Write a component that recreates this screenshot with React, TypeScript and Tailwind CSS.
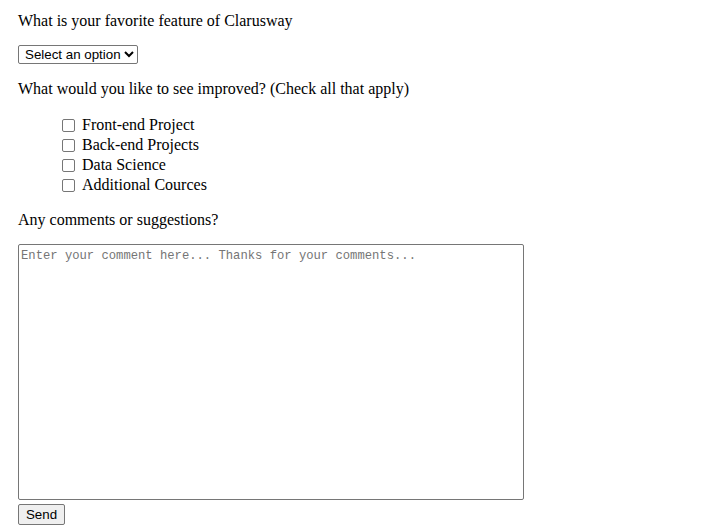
const options = ["Front-end Project", "Back-end Projects", "Data Science", "Additional Cources"];

export default function App() {
  return (
    <div className="min-h-[529px] bg-white pl-[18px] pt-[12px] text-black" style={{ fontFamily: '"Liberation Serif", serif' }}>
      <p className="text-[16px] leading-[18px]">What is your favorite feature of Clarusway</p>
      <select className="mt-[15px] h-[19px] w-[120px] rounded-[2px] border border-[#767676] bg-white pl-[2px] text-[13.33px] leading-none text-black font-['Liberation_Sans',sans-serif]">
        <option>Select an option</option>
      </select>
      <p className="mt-[14px] text-[16px] leading-[18px]">What would you like to see improved? (Check all that apply)</p>
      <ul className="mt-[17px] pl-[44px]">
        {options.map((o) => (
          <li key={o} className="flex h-[20px] items-center text-[16px]">
            <input type="checkbox" className="mr-[7px] h-[13px] w-[13px] appearance-none rounded-[2px] border border-[#767676] bg-white" />
            <span>{o}</span>
          </li>
        ))}
      </ul>
      <p className="mt-[16px] text-[16px] leading-[18px]">Any comments or suggestions?</p>
      <textarea
        className="mt-[15px] block h-[256px] w-[506px] resize-none rounded-[2px] border border-[#767676] px-[2px] pt-[3px] pb-[2px] text-[12.2px] leading-[16px] placeholder:text-[#757575] font-['Liberation_Mono',monospace]"
        placeholder="Enter your comment here... Thanks for your comments..."
      />
      <button className="mt-[4px] block h-[21px] w-[47px] rounded-[2px] border border-[#767676] bg-[#efefef] text-[13.33px] leading-none text-black font-['Liberation_Sans',sans-serif]">
        Send
      </button>
    </div>
  );
}
